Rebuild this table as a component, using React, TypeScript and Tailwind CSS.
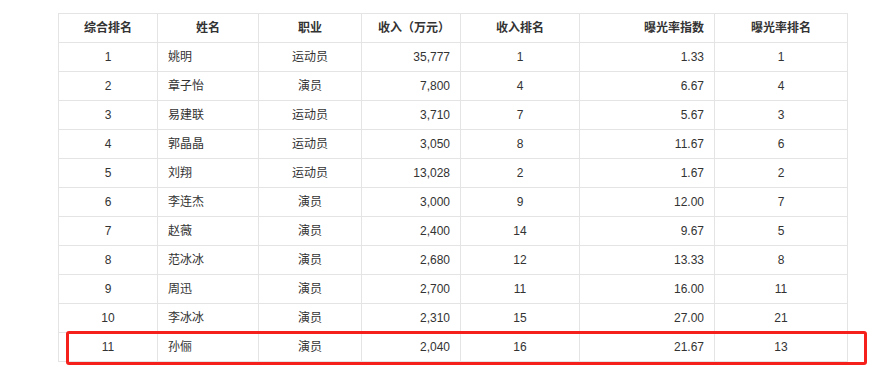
import React from "react";

const COLS = [
  { title: "综合排名", w: "w-[99px]", head: "justify-center", body: "justify-center" },
  { title: "姓名", w: "w-[101px]", head: "justify-center", body: "justify-start pl-[10px]" },
  { title: "职业", w: "w-[103px]", head: "justify-center", body: "justify-center" },
  { title: "收入（万元）", w: "w-[99px]", head: "justify-end pr-[10px]", body: "justify-end pr-[10px]" },
  { title: "收入排名", w: "w-[119px]", head: "justify-center", body: "justify-center" },
  { title: "曝光率指数", w: "w-[135px]", head: "justify-end pr-[10px]", body: "justify-end pr-[10px]" },
  { title: "曝光率排名", w: "w-[133px]", head: "justify-center", body: "justify-center" },
];

const ROWS = [
  ["1", "姚明", "运动员", "35,777", "1", "1.33", "1"],
  ["2", "章子怡", "演员", "7,800", "4", "6.67", "4"],
  ["3", "易建联", "运动员", "3,710", "7", "5.67", "3"],
  ["4", "郭晶晶", "运动员", "3,050", "8", "11.67", "6"],
  ["5", "刘翔", "运动员", "13,028", "2", "1.67", "2"],
  ["6", "李连杰", "演员", "3,000", "9", "12.00", "7"],
  ["7", "赵薇", "演员", "2,400", "14", "9.67", "5"],
  ["8", "范冰冰", "演员", "2,680", "12", "13.33", "8"],
  ["9", "周迅", "演员", "2,700", "11", "16.00", "11"],
  ["10", "李冰冰", "演员", "2,310", "15", "27.00", "21"],
  ["11", "孙俪", "演员", "2,040", "16", "21.67", "13"],
];

export default function App() {
  return (
    <div
      className="relative w-[875px] h-[367px] overflow-hidden bg-white text-[12px] text-[#333]"
      style={{ fontFamily: '"Liberation Sans", "Noto Sans CJK SC", sans-serif' }}
    >
      <div className="ml-[58px] mt-[13px] w-fit border-l border-t border-[#e4e4e4]">
        <div className="flex">
          {COLS.map((c) => (
            <div
              key={c.title}
              className={`${c.w} ${c.head} h-[29px] flex items-center font-bold border-r border-b border-[#e4e4e4]`}
            >
              {c.title}
            </div>
          ))}
        </div>
        {ROWS.map((r) => (
          <div key={r[0]} className="flex">
            {r.map((v, i) => (
              <div
                key={i}
                className={`${COLS[i].w} ${COLS[i].body} h-[29px] flex items-center border-r border-b border-[#e4e4e4]`}
              >
                {v}
              </div>
            ))}
          </div>
        ))}
      </div>

      {/* highlight box */}
      <div className="absolute left-[66px] top-[331px] w-[801px] h-[34px] border-[3px] border-[#f5201b] rounded-[3px]" />
    </div>
  );
}
